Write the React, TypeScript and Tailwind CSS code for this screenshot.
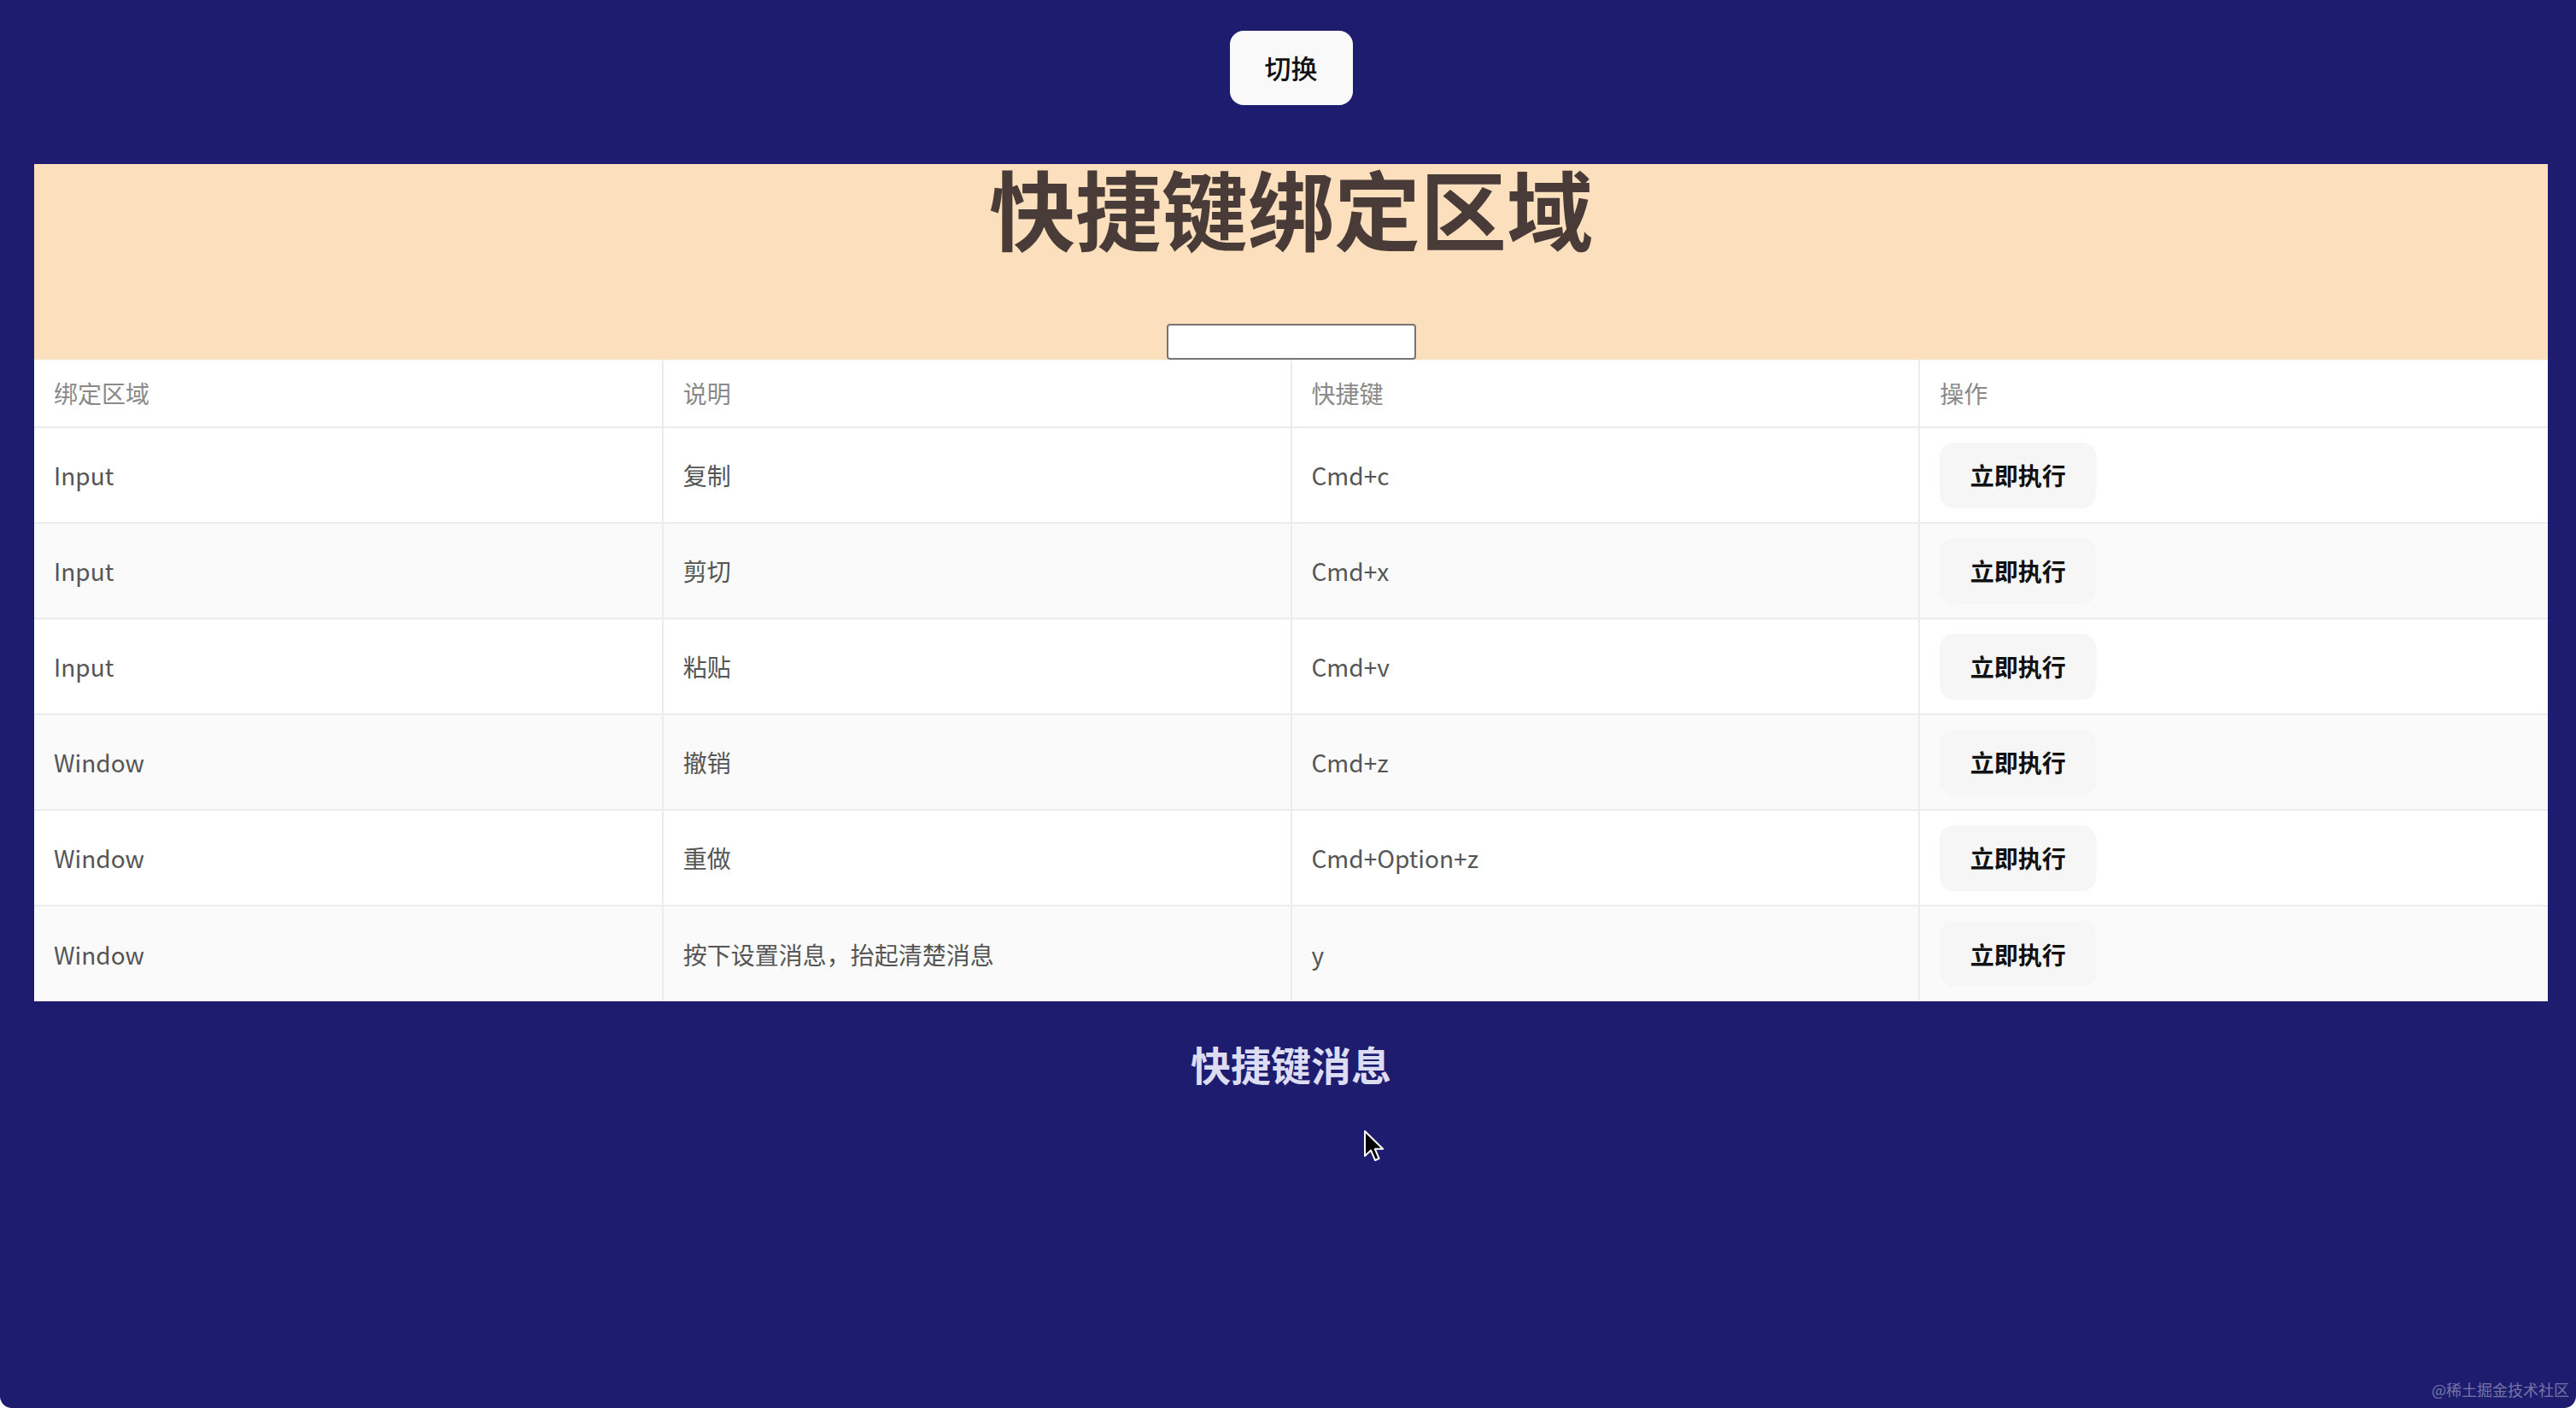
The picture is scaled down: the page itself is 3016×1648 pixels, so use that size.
const rows = [
  { area: "Input", desc: "复制", key: "Cmd+c" },
  { area: "Input", desc: "剪切", key: "Cmd+x" },
  { area: "Input", desc: "粘贴", key: "Cmd+v" },
  { area: "Window", desc: "撤销", key: "Cmd+z" },
  { area: "Window", desc: "重做", key: "Cmd+Option+z" },
  { area: "Window", desc: "按下设置消息，抬起清楚消息", key: "y" },
];

const font = "font-['Noto_Sans_CJK_SC','Noto_Sans',sans-serif]";

function Cursor() {
  return (
    <svg
      className="absolute left-[1596px] top-[1322px]"
      width="26"
      height="38"
      viewBox="0 0 13 19"
    >
      <path
        d="M1 1 L1 15.5 L4.5 12.2 L7 18 L9.3 17 L6.9 11.4 L11.6 11.4 Z"
        fill="#000"
        stroke="#fff"
        strokeWidth="1"
        strokeLinejoin="round"
      />
    </svg>
  );
}

export default function App() {
  return (
    <div className={`relative h-[1648px] w-[3016px] overflow-hidden rounded-b-[14px] bg-[#1e1c6f] ${font}`}>
      <div className="ml-[40px] flex w-[2943px] flex-col items-center">
        <button className="mt-[36px] h-[87px] w-[144px] rounded-[16px] bg-[#f9f9f9] text-[31px] font-medium text-[#111]">
          切换
        </button>

        <div className="mt-[69px] flex h-[229px] w-full flex-col items-center bg-[#fcdfbc]">
          <h1 className="text-[101px] font-bold leading-[100px] text-[#483b38]">
            快捷键绑定区域
          </h1>
          <input className="mt-auto h-[42px] w-[292px] rounded-[4px] border-2 border-[#767676] bg-white" />
        </div>

        <table className="w-full table-fixed border-collapse bg-white text-[28px]">
          <thead>
            <tr className="h-[79px] border-b-2 border-[#ececec] text-left text-[#8a8a8a]">
              <th className="border-r-2 border-[#ececec] px-[23px] font-normal">绑定区域</th>
              <th className="border-r-2 border-[#ececec] px-[23px] font-normal">说明</th>
              <th className="border-r-2 border-[#ececec] px-[23px] font-normal">快捷键</th>
              <th className="px-[23px] font-normal">操作</th>
            </tr>
          </thead>
          <tbody>
            {rows.map((r, i) => (
              <tr
                key={i}
                className={`h-[112px] border-b-2 border-[#ececec] text-[#555] last:border-b-0 ${
                  i % 2 === 1 ? "bg-[#fafafa]" : "bg-white"
                }`}
              >
                <td className="border-r-2 border-[#ececec] px-[23px]">{r.area}</td>
                <td className="border-r-2 border-[#ececec] px-[23px]">{r.desc}</td>
                <td className="border-r-2 border-[#ececec] px-[23px]">{r.key}</td>
                <td className="px-[23px]">
                  <button className="h-[77px] w-[183px] rounded-[16px] bg-[#f6f6f6] text-[28px] font-bold text-[#111]">
                    立即执行
                  </button>
                </td>
              </tr>
            ))}
          </tbody>
        </table>

        <h2 className="mt-[43px] text-[47px] font-bold leading-[60px] text-[#dcdcf2]">
          快捷键消息
        </h2>
      </div>

      <Cursor />

      <div className="absolute bottom-[8px] right-[8px] text-[18px] text-white/40">
        @稀土掘金技术社区
      </div>
    </div>
  );
}
